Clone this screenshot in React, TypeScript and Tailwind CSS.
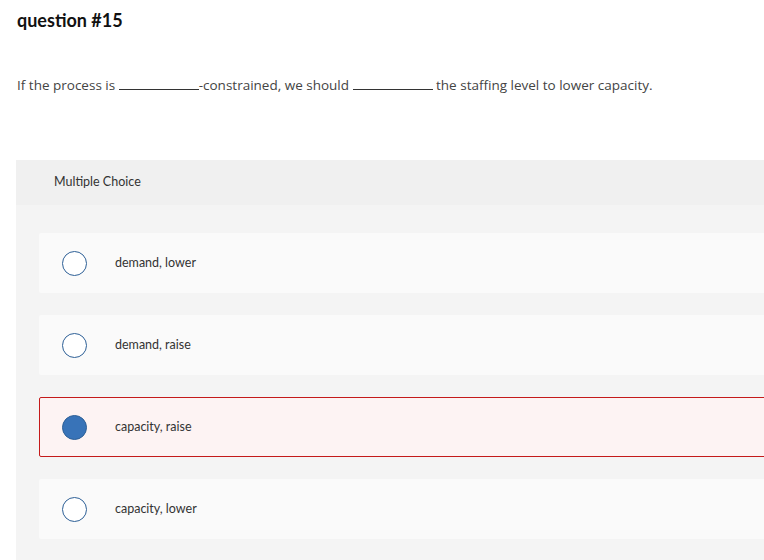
import { useState } from 'react';

const options = ['demand, lower', 'demand, raise', 'capacity, raise', 'capacity, lower'];

export default function App() {
    const [selected, setSelected] = useState(2);

    return (
        <div className="w-[764px] h-[560px] overflow-hidden bg-white text-[#333] font-['Lato',sans-serif]">
            <h1 className="pl-[17px] pt-[9px] text-[18px] font-bold text-[#111] leading-[22px]">question #15</h1>
            <p className="pl-[17px] mt-[45px] text-[13.5px] text-[#444] leading-[18px] font-['Open_Sans',sans-serif]">
                If the process is <span className="inline-block w-[80px] border-b border-[#333] align-baseline" />-constrained, we
                should <span className="inline-block w-[80px] border-b border-[#333] align-baseline" /> the staffing level to lower
                capacity.
            </p>
            <div className="ml-4 mt-[66px] w-[800px] bg-[#f4f4f4] pb-6">
                <div className="h-[45px] bg-[#f0f0f0] flex items-center pl-[38px] text-[12.5px] text-[#333]">Multiple Choice</div>
                <div className="pl-[23px] pt-[28px] flex flex-col gap-[22px]">
                    {options.map((opt, index) => {
                        const isSel = index === selected;
                        return (
                            <button
                                key={opt}
                                onClick={() => setSelected(index)}
                                className={
                                    isSel
                                        ? 'h-[60px] flex items-center text-left rounded-[2px] border border-[#c41a1a] bg-[#fdf3f3]'
                                        : 'h-[60px] flex items-center text-left rounded-[2px] border border-transparent bg-[#fafafa]'
                                }
                            >
                                <span
                                    className={
                                        isSel
                                            ? 'ml-[22px] w-[25px] h-[25px] rounded-full bg-[#3873b8] border border-[#2d5f96]'
                                            : 'ml-[22px] w-[25px] h-[25px] rounded-full bg-white border border-[#2d5f96]'
                                    }
                                />
                                <span className="ml-[28px] text-[12.5px] text-[#333]">{opt}</span>
                            </button>
                        );
                    })}
                </div>
            </div>
        </div>
    );
}
